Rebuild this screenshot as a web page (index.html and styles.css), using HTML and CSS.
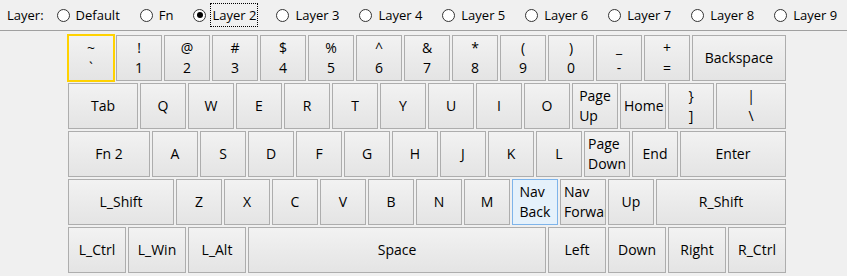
FILE: index.html
```html
<!DOCTYPE html>
<html lang="en">
<head>
    <meta charset="UTF-8">
    <title>Keyboard Layer Editor</title>
    <link rel="stylesheet" href="styles.css">
</head>
<body>
    <div id="layer-bar">
        <span class="bar-label">Layer:</span>
        <label class="radio"><span class="dot"></span><span class="text">Default</span></label>
        <label class="radio"><span class="dot"></span><span class="text">Fn</span></label>
        <label class="radio checked"><span class="dot"></span><span class="text focus">Layer 2</span></label>
        <label class="radio"><span class="dot"></span><span class="text">Layer 3</span></label>
        <label class="radio"><span class="dot"></span><span class="text">Layer 4</span></label>
        <label class="radio"><span class="dot"></span><span class="text">Layer 5</span></label>
        <label class="radio"><span class="dot"></span><span class="text">Layer 6</span></label>
        <label class="radio"><span class="dot"></span><span class="text">Layer 7</span></label>
        <label class="radio"><span class="dot"></span><span class="text">Layer 8</span></label>
        <label class="radio"><span class="dot"></span><span class="text">Layer 9</span></label>
    </div>

    <div id="keyboard">
        <!-- Row 1 -->
        <div class="key u1 selected"><span class="two">~<br>`</span></div>
        <div class="key u1"><span class="two">!<br>1</span></div>
        <div class="key u1"><span class="two">@<br>2</span></div>
        <div class="key u1"><span class="two">#<br>3</span></div>
        <div class="key u1"><span class="two">$<br>4</span></div>
        <div class="key u1"><span class="two">%<br>5</span></div>
        <div class="key u1"><span class="two">^<br>6</span></div>
        <div class="key u1"><span class="two">&amp;<br>7</span></div>
        <div class="key u1"><span class="two">*<br>8</span></div>
        <div class="key u1"><span class="two">(<br>9</span></div>
        <div class="key u1"><span class="two">)<br>0</span></div>
        <div class="key u1"><span class="two">_<br>-</span></div>
        <div class="key u1"><span class="two">+<br>=</span></div>
        <div class="key u2"><span>Backspace</span></div>

        <!-- Row 2 -->
        <div class="key u15"><span>Tab</span></div>
        <div class="key u1"><span>Q</span></div>
        <div class="key u1"><span>W</span></div>
        <div class="key u1"><span>E</span></div>
        <div class="key u1"><span>R</span></div>
        <div class="key u1"><span>T</span></div>
        <div class="key u1"><span>Y</span></div>
        <div class="key u1"><span>U</span></div>
        <div class="key u1"><span>I</span></div>
        <div class="key u1"><span>O</span></div>
        <div class="key u1"><span class="words">Page<br>Up</span></div>
        <div class="key u1"><span>Home</span></div>
        <div class="key u1"><span class="two">}<br>]</span></div>
        <div class="key u15"><span class="two">|<br>\</span></div>

        <!-- Row 3 -->
        <div class="key u175"><span>Fn 2</span></div>
        <div class="key u1"><span>A</span></div>
        <div class="key u1"><span>S</span></div>
        <div class="key u1"><span>D</span></div>
        <div class="key u1"><span>F</span></div>
        <div class="key u1"><span>G</span></div>
        <div class="key u1"><span>H</span></div>
        <div class="key u1"><span>J</span></div>
        <div class="key u1"><span>K</span></div>
        <div class="key u1"><span>L</span></div>
        <div class="key u1"><span class="words">Page<br>Down</span></div>
        <div class="key u1"><span>End</span></div>
        <div class="key u225"><span>Enter</span></div>

        <!-- Row 4 -->
        <div class="key u225"><span>L_Shift</span></div>
        <div class="key u1"><span>Z</span></div>
        <div class="key u1"><span>X</span></div>
        <div class="key u1"><span>C</span></div>
        <div class="key u1"><span>V</span></div>
        <div class="key u1"><span>B</span></div>
        <div class="key u1"><span>N</span></div>
        <div class="key u1"><span>M</span></div>
        <div class="key u1 hover"><span class="words">Nav<br>Back</span></div>
        <div class="key u1"><span class="words">Nav<br>Forward</span></div>
        <div class="key u1"><span>Up</span></div>
        <div class="key u275"><span>R_Shift</span></div>

        <!-- Row 5 -->
        <div class="key u125"><span>L_Ctrl</span></div>
        <div class="key u125"><span>L_Win</span></div>
        <div class="key u125"><span>L_Alt</span></div>
        <div class="key u625"><span>Space</span></div>
        <div class="key u125"><span>Left</span></div>
        <div class="key u125"><span>Down</span></div>
        <div class="key u125"><span>Right</span></div>
        <div class="key u125"><span>R_Ctrl</span></div>
    </div>
</body>
</html>
```

FILE: styles.css
```css
* {
    margin: 0;
    padding: 0;
    box-sizing: border-box;
}

body {
    background-color: #f0f0f0;
    font-family: "Open Sans", "Noto Sans", sans-serif;
    font-size: 14px;
    color: #000;
}

#layer-bar {
    height: 31px;
    display: flex;
    align-items: center;
    padding-left: 7px;
    border-bottom: 1px solid #a0a0a0;
    white-space: nowrap;
    font-size: 13px;
}

.bar-label {
    margin-right: 13px;
}

.radio {
    display: flex;
    align-items: center;
    gap: 5px;
    margin-right: 19px;
    flex-shrink: 0;
}

.dot {
    width: 13px;
    height: 13px;
    border: 1px solid #333;
    border-radius: 50%;
    background-color: #fff;
    display: flex;
    align-items: center;
    justify-content: center;
}

.checked .dot::after {
    content: "";
    width: 6px;
    height: 6px;
    border-radius: 50%;
    background-color: #000;
}

.text {
    padding: 2px 1px;
    line-height: 18px;
}

.focus {
    outline: 1px dotted #000;
}

#keyboard {
    display: grid;
    grid-template-columns: repeat(60, 12px);
    grid-auto-rows: 48px;
    margin: 4px 0 0 68px;
}

.key {
    margin: 0 2px 2px 0;
    border: 1px solid #adadad;
    background: linear-gradient(#f2f2f2, #e4e4e4);
    padding: 0 3px;
    overflow: hidden;
    white-space: nowrap;
    text-align: center;
    display: flex;
    flex-direction: column;
    justify-content: center;
}

.key span {
    display: block;
    line-height: 20px;
}

.key .words {
    display: inline-block;
    text-align: left;
    align-self: safe center;
}

.u1 { grid-column: span 4; }
.u125 { grid-column: span 5; }
.u15 { grid-column: span 6; }
.u175 { grid-column: span 7; }
.u2 { grid-column: span 8; }
.u225 { grid-column: span 9; }
.u275 { grid-column: span 11; }
.u625 { grid-column: span 25; }

.selected {
    border: 1px solid #ffd200;
    box-shadow: 0 0 0 1px #ffd200;
}

.hover {
    border-color: #7eb4ea;
    background: #e5f1fb;
}
```
